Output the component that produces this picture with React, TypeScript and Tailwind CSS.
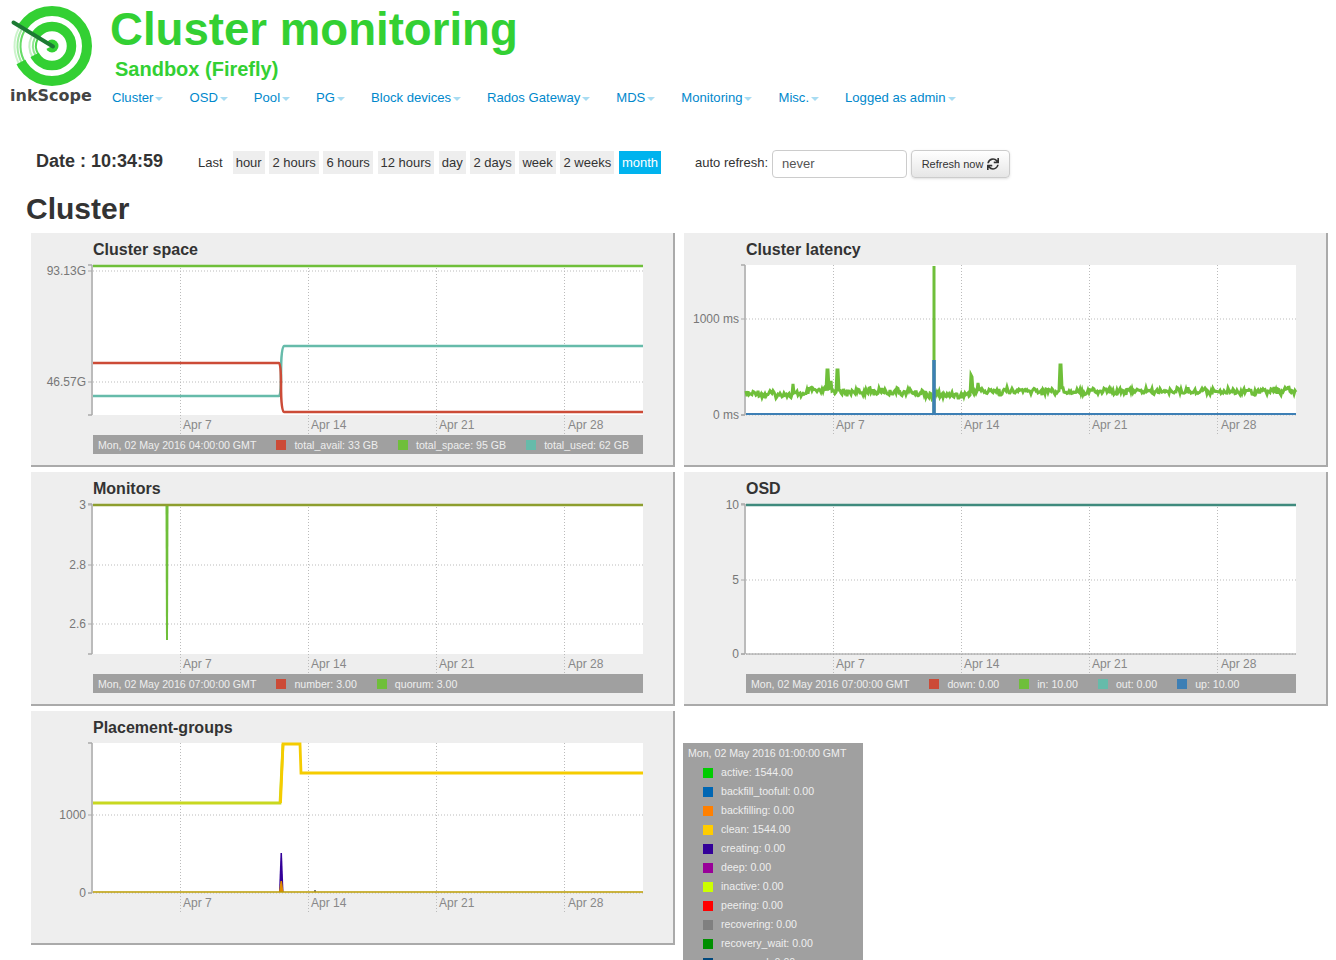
import type { ReactNode } from "react";
import { FaSync } from "react-icons/fa";

const navItems = ["Cluster", "OSD", "Pool", "PG", "Block devices", "Rados Gateway", "MDS", "Monitoring", "Misc.", "Logged as admin"];
const ranges = ["hour", "2 hours", "6 hours", "12 hours", "day", "2 days", "week", "2 weeks", "month"];

const pgLegend = [
  ["#00cc00", "active: 1544.00"],
  ["#0066b3", "backfill_toofull: 0.00"],
  ["#ff8000", "backfilling: 0.00"],
  ["#ffcc00", "clean: 1544.00"],
  ["#330099", "creating: 0.00"],
  ["#990099", "deep: 0.00"],
  ["#ccff00", "inactive: 0.00"],
  ["#ff0000", "peering: 0.00"],
  ["#808080", "recovering: 0.00"],
  ["#008f00", "recovery_wait: 0.00"],
  ["#00487d", "remapped: 0.00"],
];

const GREEN = "#6fbf3a";
const RED = "#cc4b37";
const TEAL = "#66bbaa";
const BLUE = "#3d7fb5";

// deterministic wobble for the latency line
function latencyPath() {
  const spikes: Record<number, number> = { 47: 119, 81: 105, 82: 105, 85: 116, 91: 105, 92: 105, 225: 110, 226: 112, 232: 118, 314: 100, 315: 100 };
  let d = "M0 126";
  for (let x = 1; x <= 550; x += 1) {
    const r = Math.sin(x * 12.9898) * 43758.5453;
    const n = (r - Math.floor(r) - 0.5) * 6 + Math.sin(x * 0.45) * 1.2;
    const drift = x < 180 ? Math.sin(x * 0.035) * 1.6 + (x > 60 && x < 95 ? -3 : 0) : x < 225 ? 2 : -2;
    const y = spikes[x] ?? 128 + n + drift;
    d += ` L${x} ${y.toFixed(1)}`;
  }
  return d;
}

function Chart({ ticks, children }: { ticks: [string, number][]; children: ReactNode }) {
  const grid = [87, 215, 343, 471];
  const labels = ["Apr 7", "Apr 14", "Apr 21", "Apr 28"];
  return (
    <svg width="630" height="176" viewBox="-62 -6 630 176" className="block">
      <rect x="0" y="0" width="550" height="150" fill="#fff" />
      <path d="M-1 0V150M-5 0H-1M-5 150H-1" stroke="#aaa" strokeWidth="1.5" fill="none" />
      {ticks.map(([t, y]) => (
        <g key={t}>
          <path d={`M-5 ${y}H-1`} stroke="#aaa" />
          <path d={`M0 ${y}H550`} stroke="#bbb" strokeDasharray="1 2" />
          <text x="-7" y={y + 4} textAnchor="end" fontSize="12" fill="#777">{t}</text>
        </g>
      ))}
      {grid.map((x, i) => (
        <g key={x}>
          <path d={`M${x}.5 0V170`} stroke="#bbb" strokeDasharray="1 2" />
          <text x={i === 3 ? x + 4 : x + 3} y="164" fontSize="12" fill="#888">{labels[i]}</text>
        </g>
      ))}
      {children}
    </svg>
  );
}

function Legend({ date, items }: { date: string; items: [string, string][] }) {
  return (
    <div className="ml-[62px] flex h-[19px] w-[550px] items-center gap-5 bg-[#a0a0a0] pt-[2px] pl-[5px] text-[10.6px] text-[#eee]">
      <span>{date}</span>
      {items.map(([c, t]) => (
        <span key={t} className="flex items-center gap-2">
          <span className="h-2.5 w-2.5" style={{ background: c }} />
          {t}
        </span>
      ))}
    </div>
  );
}

function Panel({ title, children }: { title: string; children: ReactNode }) {
  return (
    <div className="h-[234px] w-[644px] border-r-2 border-b-2 border-[#aaa] bg-[#eee]">
      <h3 className="h-[26px] pt-[7px] pl-[62px] text-base leading-5 font-bold text-[#333]">{title}</h3>
      {children}
    </div>
  );
}

function arc(r: number, above: number, below: number) {
  const rad = Math.PI / 180;
  const x0 = 52 - r * Math.cos(above * rad);
  const y0 = 45 - r * Math.sin(above * rad);
  const x1 = 52 - r * Math.cos(below * rad);
  const y1 = 45 + r * Math.sin(below * rad);
  return `M${x0.toFixed(1)} ${y0.toFixed(1)} A${r} ${r} 0 0 0 ${x1.toFixed(1)} ${y1.toFixed(1)}`;
}

function Logo() {
  return (
    <div className="w-[100px]">
      <svg width="84" height="84" viewBox="10 4 84 84" className="block">
        <g transform="translate(0 1)">
          <circle cx="52" cy="45" r="35" fill="none" stroke="#33d033" strokeWidth="10" />
          <circle cx="52" cy="45" r="19.5" fill="none" stroke="#33d033" strokeWidth="9.5" />
          <circle cx="52" cy="45" r="6.5" fill="#33d033" />
          <path d="M52 45 L16 24 A41 41 0 0 0 15 64 Z" fill="#fff" />
          <g fill="none" stroke="#33d033">
            <path d={arc(31.5, 28, 32)} strokeWidth="2" opacity=".75" />
            <path d={arc(34.5, 28, 32)} strokeWidth="2" opacity=".45" />
            <path d={arc(37.5, 28, 32)} strokeWidth="2" opacity=".25" />
            <path d={arc(16, 26, 32)} strokeWidth="2" opacity=".85" />
            <path d={arc(19, 26, 32)} strokeWidth="2" opacity=".55" />
            <path d={arc(22.5, 26, 32)} strokeWidth="2" opacity=".3" />
          </g>
          <path d="M13.5 21.5 L53 45.5" stroke="#1c7a33" strokeWidth="4" strokeLinecap="round" />
        </g>
      </svg>
      <div className="font-['DejaVu_Sans',sans-serif] text-base leading-4 font-bold text-[#444]">inkScope</div>
    </div>
  );
}

export default function App() {
  return (
    <div className="h-[960px] w-[1336px] overflow-hidden bg-white font-['Liberation_Sans',sans-serif] text-[#333]">
      <header className="flex h-[150px] pl-[10px]">
        <div className="pt-[4px]">
          <Logo />
        </div>
        <div>
          <h1 className="pt-[7px] text-[45.6px] leading-[46px] font-bold text-[#33d033]">Cluster monitoring</h1>
          <h2 className="mt-[4px] ml-[5px] text-[20px] leading-6 font-bold text-[#33d033]">Sandbox (Firefly)</h2>
          <nav className="ml-[2px] mt-[7px] flex gap-[26px] text-[13.1px] leading-5 text-[#0088cc]">
            {navItems.map((n) => (
              <span key={n} className="flex items-center">
                {n}
                <span className="ml-[2px] mt-[2px] h-0 w-0 border-x-4 border-t-4 border-x-transparent border-t-[#a8dcf2]" />
              </span>
            ))}
          </nav>
        </div>
      </header>

      <div className="flex h-[28px] items-center pl-[36px] text-[13px]">
        <span className="-mt-[6px] text-[18px] font-bold">Date : 10:34:59</span>
        <span className="-mt-[2px] ml-[35px]">Last</span>
        <div className="-mt-[4px] ml-[10px] flex gap-[4.7px]">
          {ranges.map((r) => (
            <span key={r} className={r === "month" ? "bg-[#00b3ee] px-[3px] py-[3px] leading-[17px] text-white" : "bg-[#eee] px-[3px] py-[3px] leading-[17px]"}>
              {r}
            </span>
          ))}
        </div>
        <span className="-mt-[2px] ml-[34px]">auto refresh:</span>
        <div className="ml-[4px] flex h-[28px] w-[135px] items-center rounded border border-[#ccc] pl-[9px] text-[#555]">never</div>
        <button className="ml-[4px] flex h-[28px] w-[99px] items-center justify-center gap-1 rounded border border-[#ccc] bg-gradient-to-b from-white to-[#e6e6e6] text-[11px] text-[#333] shadow-sm">
          Refresh now <FaSync className="text-[12px]" />
        </button>
      </div>

      <h1 className="mt-[13px] ml-[26px] h-[42px] text-[30px] leading-[36px] font-bold">Cluster</h1>

      <div className="ml-[31px] grid w-[1297px] grid-cols-[644px_644px] gap-x-[9px] gap-y-[5px]">
        <Panel title="Cluster space">
          <Chart ticks={[["93.13G", 6], ["46.57G", 117]]}>
            <path d="M0 131H186Q188 131 188 110Q188 81 191 81H550" fill="none" stroke={TEAL} strokeWidth="2.6" />
            <path d="M0 98H186Q188 98 188 120Q188 147 191 147H550" fill="none" stroke={RED} strokeWidth="2.6" />
            <path d="M0 1H550" stroke={GREEN} strokeWidth="2.6" />
          </Chart>
          <Legend date="Mon, 02 May 2016 04:00:00 GMT" items={[[RED, "total_avail: 33 GB"], [GREEN, "total_space: 95 GB"], [TEAL, "total_used: 62 GB"]]} />
        </Panel>

        <Panel title="Cluster latency">
          <Chart ticks={[["1000 ms", 54], ["0 ms", 150]]}>
            <path d={latencyPath()} fill="none" stroke={GREEN} strokeWidth="3" />
            <path d="M188 1V149" stroke={GREEN} strokeWidth="3" />
            <path d="M0 149H550" stroke={BLUE} strokeWidth="2" fill="none" />
            <path d="M188 95V149" stroke={BLUE} strokeWidth="3.5" />
          </Chart>
        </Panel>

        <Panel title="Monitors">
          <Chart ticks={[["3", 1], ["2.8", 61], ["2.6", 120]]}>
            <path d="M72.5 1H75.5L75 136H73Z" fill={GREEN} />
            <path d="M0 1H550" stroke="#8d9e2e" strokeWidth="2.6" />
          </Chart>
          <Legend date="Mon, 02 May 2016 07:00:00 GMT" items={[[RED, "number: 3.00"], [GREEN, "quorum: 3.00"]]} />
        </Panel>

        <Panel title="OSD">
          <Chart ticks={[["10", 1], ["5", 76], ["0", 150]]}>
            <path d="M0 150H550" stroke="#999" />
            <path d="M0 1H550" stroke="#3f8a7d" strokeWidth="2.6" />
          </Chart>
          <Legend date="Mon, 02 May 2016 07:00:00 GMT" items={[[RED, "down: 0.00"], [GREEN, "in: 10.00"], [TEAL, "out: 0.00"], [BLUE, "up: 10.00"]]} />
        </Panel>

        <Panel title="Placement-groups">
          <Chart ticks={[["1000", 72], ["0", 150]]}>
            <path d="M186 149L187.5 110H189L190.5 149Z" fill="#330099" />
            <path d="M186 149L187.5 138H189L190.5 149Z" fill="#e08a00" />
            <path d="M222 149V147" stroke="#555" strokeWidth="1.5" />
            <path d="M0 149H550" stroke="#b89a00" strokeWidth="1.6" />
            <path d="M0 60H187L190 1" fill="none" stroke="#c8d820" strokeWidth="2.8" />
            <path d="M187.5 60L190 1H207L208 30H550" fill="none" stroke="#f5cc00" strokeWidth="2.8" />
          </Chart>
        </Panel>

        <div className="-ml-px pt-[32px]">
          <div className="w-[180px] bg-[#a0a0a0] pt-px pb-2 pl-[5px] text-[10.6px] text-[#eee]">
            <div className="flex h-[19px] items-center">Mon, 02 May 2016 01:00:00 GMT</div>
            {pgLegend.map(([c, t]) => (
              <div key={t} className="flex h-[19px] items-center gap-2 pl-[15px]">
                <span className="h-2.5 w-2.5" style={{ background: c }} />
                {t}
              </div>
            ))}
          </div>
        </div>
      </div>
    </div>
  );
}
